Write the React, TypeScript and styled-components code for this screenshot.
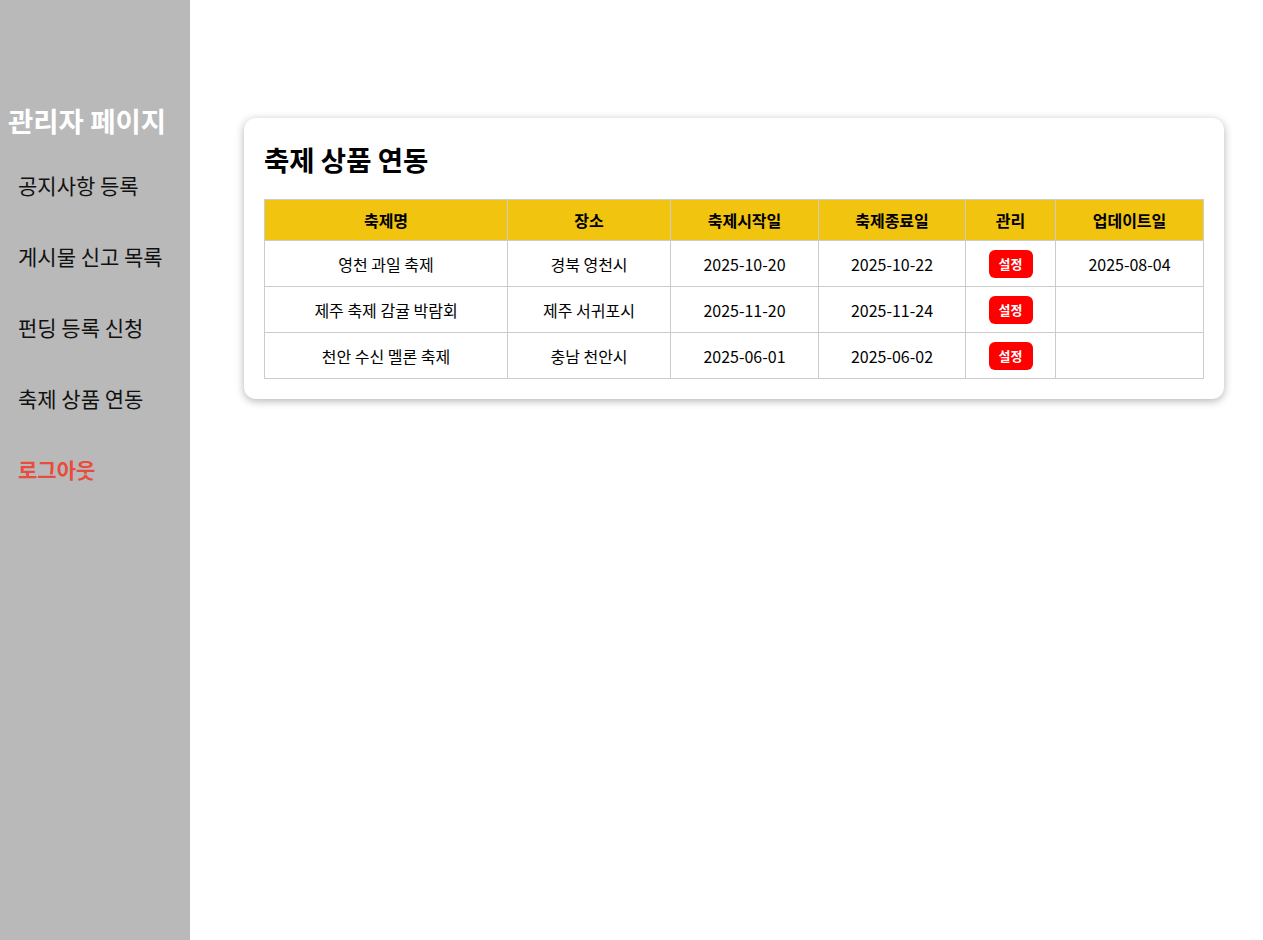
import React from "react";
import styled, { createGlobalStyle } from "styled-components";

interface Festival {
    name: string;
    place: string;
    start: string;
    end: string;
    updated: string;
}

const festivals: Festival[] = [
    { name: "영천 과일 축제", place: "경북 영천시", start: "2025-10-20", end: "2025-10-22", updated: "2025-08-04" },
    { name: "제주 축제 감귤 박람회", place: "제주 서귀포시", start: "2025-11-20", end: "2025-11-24", updated: "" },
    { name: "천안 수신 멜론 축제", place: "충남 천안시", start: "2025-06-01", end: "2025-06-02", updated: "" },
];

const menuItems = ["공지사항 등록", "게시물 신고 목록", "펀딩 등록 신청", "축제 상품 연동"];

const columns = [
    { label: "축제명", width: 243 },
    { label: "장소", width: 163 },
    { label: "축제시작일", width: 148 },
    { label: "축제종료일", width: 147 },
    { label: "관리", width: 90 },
    { label: "업데이트일", width: 148 },
];

export default function App() {
    return (
        <>
            <GlobalStyle />
            <Layout>
                <Sidebar>
                    <SidebarTitle>관리자 페이지</SidebarTitle>
                    <Menu>
                        {menuItems.map((item, index) => (
                            <MenuItem key={index}>{item}</MenuItem>
                        ))}
                        <MenuItem $danger>로그아웃</MenuItem>
                    </Menu>
                </Sidebar>
                <Main>
                    <Card>
                        <CardTitle>축제 상품 연동</CardTitle>
                        <Table>
                            <colgroup>
                                {columns.map((col, index) => (
                                    <col key={index} style={{ width: col.width }} />
                                ))}
                            </colgroup>
                            <thead>
                                <tr>
                                    {columns.map((col, index) => (
                                        <HeadCell key={index}>{col.label}</HeadCell>
                                    ))}
                                </tr>
                            </thead>
                            <tbody>
                                {festivals.map((f, index) => (
                                    <tr key={index}>
                                        <Cell>{f.name}</Cell>
                                        <Cell>{f.place}</Cell>
                                        <Cell>{f.start}</Cell>
                                        <Cell>{f.end}</Cell>
                                        <Cell>
                                            <SettingButton>설정</SettingButton>
                                        </Cell>
                                        <Cell>{f.updated}</Cell>
                                    </tr>
                                ))}
                            </tbody>
                        </Table>
                    </Card>
                </Main>
            </Layout>
        </>
    );
}

const GlobalStyle = createGlobalStyle`
    html, body {
        margin: 0;
        padding: 0;
        font-family: "Noto Sans CJK KR", "Noto Sans", sans-serif;
        background: #ffffff;
    }
`;

const Layout = styled.div`
    display: flex;
    min-height: 940px;
`;

const Sidebar = styled.aside`
    width: 190px;
    flex-shrink: 0;
    background: #b9b9b9;
    padding-top: 100px;
    box-sizing: border-box;
`;

const SidebarTitle = styled.h2`
    margin: 0;
    padding-left: 8px;
    font-size: 27.5px;
    font-weight: 700;
    line-height: 40px;
    color: #ffffff;
    white-space: nowrap;
`;

const Menu = styled.ul`
    list-style: none;
    margin: 0;
    padding: 30px 0 0 18px;
`;

const MenuItem = styled.li<{ $danger?: boolean }>`
    font-size: 21px;
    line-height: 30px;
    height: 71px;
    color: ${props => props.$danger ? "#e74c3c" : "#111111"};
    font-weight: ${props => props.$danger ? 700 : 400};
    white-space: nowrap;
`;

const Main = styled.main`
    flex: 1;
    padding: 118px 39px 0 54px;
`;

const Card = styled.section`
    background: #ffffff;
    border-radius: 12px;
    box-shadow: 0 2px 8px rgba(0, 0, 0, 0.3);
    padding: 22px 20px 20px 20px;
`;

const CardTitle = styled.h2`
    margin: 0 0 21px 0;
    font-size: 27.5px;
    font-weight: 700;
    line-height: 38px;
    color: #000000;
`;

const Table = styled.table`
    width: 100%;
    border-collapse: collapse;
    table-layout: fixed;
    font-size: 16px;
`;

const HeadCell = styled.th`
    background: #f1c40f;
    border: 1px solid #cccccc;
    height: 40px;
    padding: 0;
    font-weight: 700;
    color: #000000;
    text-align: center;
`;

const Cell = styled.td`
    border: 1px solid #cccccc;
    height: 45px;
    padding: 0;
    text-align: center;
    color: #000000;
`;

const SettingButton = styled.button`
    width: 44px;
    height: 28px;
    border: none;
    border-radius: 6px;
    background: #ff0000;
    color: #ffffff;
    font-family: "Noto Sans CJK KR", sans-serif;
    font-size: 13px;
    font-weight: 700;
    padding: 0;
    cursor: pointer;
    vertical-align: middle;
`;
